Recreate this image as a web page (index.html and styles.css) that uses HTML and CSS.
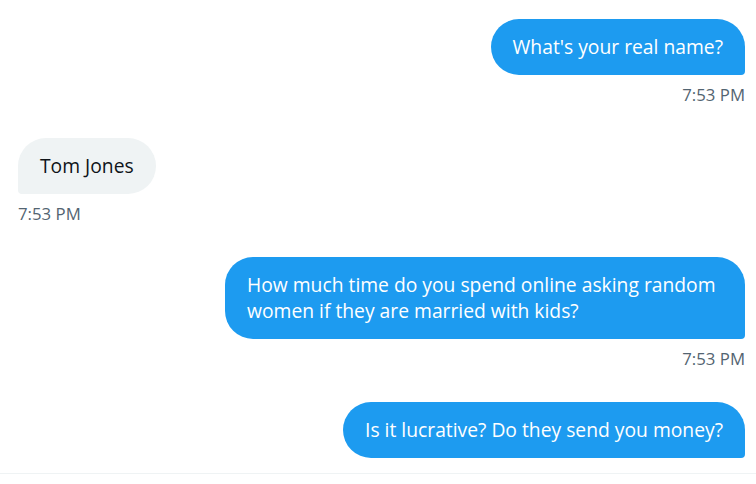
FILE: index.html
```html
<!DOCTYPE html>
<html lang="en">
<head>
    <meta charset="UTF-8">
    <meta name="viewport" content="width=device-width, initial-scale=1.0">
    <title>Messages</title>
    <link rel="stylesheet" href="styles.css">
</head>
<body>
    <div class="conversation">
        <div class="message sent">
            <div class="bubble">What's your real name?</div>
            <div class="time">7:53 PM</div>
        </div>
        <div class="message received">
            <div class="bubble">Tom Jones</div>
            <div class="time">7:53 PM</div>
        </div>
        <div class="message sent">
            <div class="bubble">How much time do you spend online asking random women if they are married with kids?</div>
            <div class="time">7:53 PM</div>
        </div>
        <div class="message sent">
            <div class="bubble">Is it lucrative? Do they send you money?</div>
        </div>
    </div>
    <div class="divider"></div>
</body>
</html>
```
FILE: styles.css
```css
body {
    margin: 0;
    background-color: #fff;
    font-family: "Open Sans", "Liberation Sans", sans-serif;
    overflow: hidden;
}
.conversation {
    display: flex;
    flex-direction: column;
    gap: 32px;
    padding: 19px 11px 0 18px;
}
.message {
    display: flex;
    flex-direction: column;
}
.message.sent {
    align-items: flex-end;
}
.message.received {
    align-items: flex-start;
}
.bubble {
    max-width: 476px;
    padding: 15px 22px;
    font-size: 19.3px;
    line-height: 26px;
    border-radius: 28px;
}
.sent .bubble {
    background-color: #1d9bf0;
    color: #fff;
    border-bottom-right-radius: 4px;
}
.received .bubble {
    background-color: #eff3f4;
    color: #0f1419;
    border-bottom-left-radius: 4px;
}
.time {
    margin-top: 9px;
    font-size: 16.8px;
    line-height: 22px;
    color: #536471;
}
.divider {
    margin-top: 15px;
    border-top: 1px solid #eff3f4;
}
```
